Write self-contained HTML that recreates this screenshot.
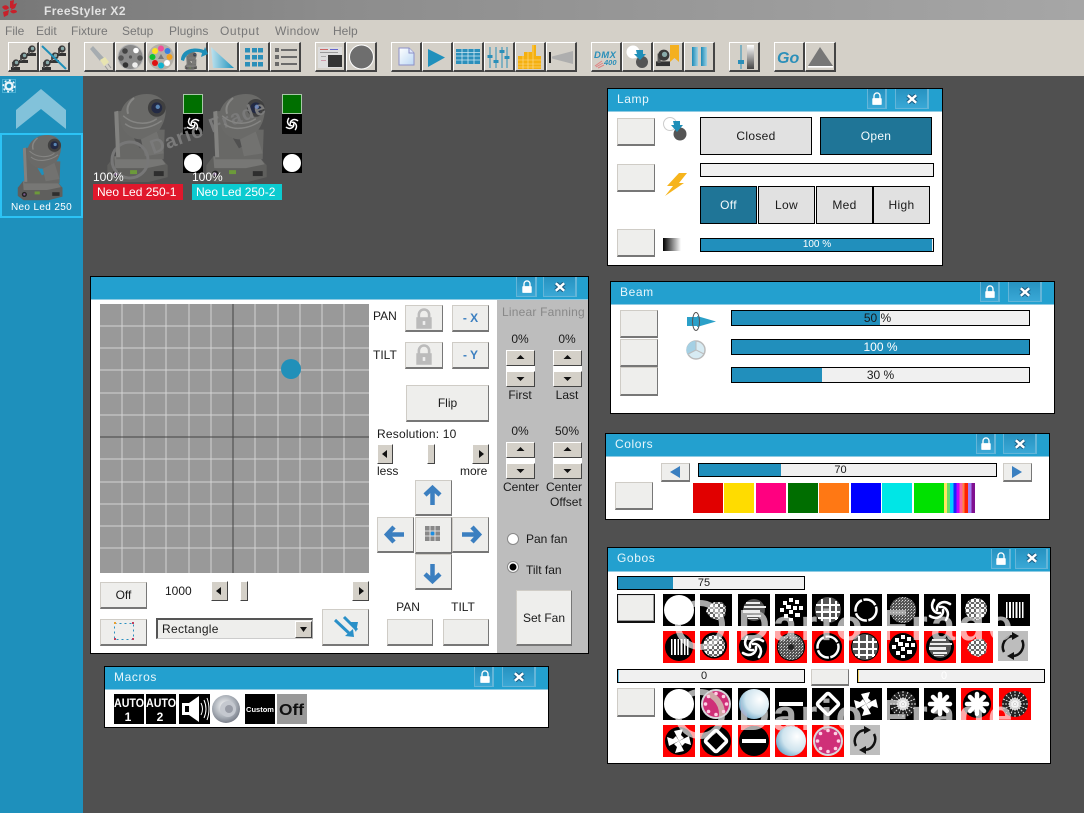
<!DOCTYPE html>
<html><head><meta charset="utf-8"><title>FreeStyler X2</title>
<style>
html,body{margin:0;padding:0}
body{width:1084px;height:813px;overflow:hidden;position:relative;background:#505050;font-family:"Liberation Sans",sans-serif;font-size:12px;color:#1a1a1a}
.a{position:absolute;box-sizing:border-box}
.t{position:absolute;white-space:nowrap;line-height:14px;font-size:12px;color:#1a1a1a}
.c{text-align:center}
.w{position:absolute;box-sizing:border-box;background:#fff;border:1px solid #000}
.h{position:absolute;box-sizing:border-box;background:#23a0cf;border-bottom:1px solid #8fcbe3;color:#e8f6fb;line-height:20px;padding-left:9px;letter-spacing:.6px;font-size:12px}
.b{position:absolute;box-sizing:border-box;background:#eeeeec;border-top:1px solid #cfccc6;border-left:1px solid #cfccc6;border-right:1px solid #777;border-bottom:2px solid #777;text-align:center;color:#1a1a1a}
.tb{position:absolute;box-sizing:border-box;top:42px;width:31px;height:30px;background:#d4d0c8;border-top:1px solid #fff;border-left:1px solid #fff;border-right:2px solid #444;border-bottom:2px solid #444}
.l{position:absolute;box-sizing:border-box;top:0;height:20px;background:linear-gradient(#2792c0,#39a8d6);border:1px solid #64b5d8;border-top:0;border-right:2px solid #64b5d8}
.bar{position:absolute;box-sizing:border-box;background:#f0f0f0;border:1px solid #000;text-align:center;overflow:hidden}
.fill{position:absolute;left:0;top:0;bottom:0;background:#218fbc}
.bar span{position:relative;display:block}
.ctl{position:absolute;box-sizing:border-box;background:#e1e1e1;border:1px solid #000;text-align:center;line-height:36px;letter-spacing:.3px}
.on{background:#1f7597;color:#f4fbfd}
.sp{position:absolute;box-sizing:border-box;background:#d4d0c8;border-top:1px solid #fff;border-left:1px solid #fff;border-right:1px solid #444;border-bottom:1px solid #444}
.wm{position:absolute;white-space:nowrap;font-weight:bold;mix-blend-mode:lighten}
</style></head><body>

<div class="a" style="left:0;top:0;width:1084px;height:20px;background:linear-gradient(90deg,#777 0,#8c8c8c 30%,#a6a6a6 100%)"></div>
<div class="t" style="left:44px;top:4px;color:#e2e2e2;font-weight:bold;letter-spacing:.4px">FreeStyler X2</div>
<div class="a" style="left:0;top:20px;width:1084px;height:56px;background:#d4d0c8"></div>
<div class="t" style="left:5px;top:24px;color:#777">File</div>
<div class="t" style="left:36px;top:24px;color:#777">Edit</div>
<div class="t" style="left:71px;top:24px;color:#777">Fixture</div>
<div class="t" style="left:122px;top:24px;color:#777">Setup</div>
<div class="t" style="left:169px;top:24px;color:#777">Plugins</div>
<div class="t" style="left:220px;top:24px;color:#777;letter-spacing:.6px">Output</div>
<div class="t" style="left:275px;top:24px;color:#777;letter-spacing:.3px">Window</div>
<div class="t" style="left:333px;top:24px;color:#777">Help</div>

<div class="tb" style="left:8px"></div><div class="tb" style="left:39px"></div>
<div class="tb" style="left:84px"></div><div class="tb" style="left:115px"></div><div class="tb" style="left:146px"></div><div class="tb" style="left:177px"></div><div class="tb" style="left:208px"></div><div class="tb" style="left:239px"></div><div class="tb" style="left:270px"></div>
<div class="tb" style="left:315px"></div><div class="tb" style="left:346px"></div>
<div class="tb" style="left:391px"></div><div class="tb" style="left:422px"></div><div class="tb" style="left:453px"></div><div class="tb" style="left:484px"></div><div class="tb" style="left:515px"></div><div class="tb" style="left:546px"></div>
<div class="tb" style="left:591px"></div><div class="tb" style="left:622px"></div><div class="tb" style="left:653px"></div><div class="tb" style="left:684px"></div>
<div class="tb" style="left:729px"></div>
<div class="tb" style="left:774px"></div><div class="tb" style="left:805px"></div>

<!-- sidebar -->
<div class="a" style="left:0;top:76px;width:83px;height:737px;background:#1e90bc"></div>
<div class="a" style="left:0;top:133px;width:83px;height:85px;border:2px solid #2cc3f5"></div>
<div class="t c" style="left:0;top:201px;width:83px;font-size:10px;color:#fff;letter-spacing:.35px">Neo Led 250</div>

<!-- fixtures -->
<div class="a" style="left:93px;top:184px;width:90px;height:16px;background:#e0182c"></div>
<div class="a" style="left:192px;top:184px;width:90px;height:16px;background:#0ccbd0"></div>
<div class="a" style="left:183px;top:94px;width:20px;height:20px;background:#006f00;border:1px solid #a8c8a8"></div>
<div class="a" style="left:282px;top:94px;width:20px;height:20px;background:#006f00;border:1px solid #a8c8a8"></div>

<!-- Lamp -->
<div class="w" style="left:607px;top:88px;width:336px;height:178px"></div>
<div class="h" style="left:608px;top:89px;width:334px;height:23px">Lamp</div>
<div class="l" style="left:867px;top:89px;width:20px"></div><div class="l" style="left:895px;top:89px;width:34px"></div>
<div class="b" style="left:617px;top:118px;width:38px;height:28px"></div>
<div class="b" style="left:617px;top:164px;width:38px;height:28px"></div>
<div class="b" style="left:617px;top:229px;width:38px;height:28px"></div>
<div class="ctl" style="left:700px;top:117px;width:112px;height:38px">Closed</div>
<div class="ctl on" style="left:820px;top:117px;width:112px;height:38px">Open</div>
<div class="bar" style="left:700px;top:163px;width:234px;height:14px"></div>
<div class="ctl on" style="left:700px;top:186px;width:57px;height:38px">Off</div>
<div class="ctl" style="left:758px;top:186px;width:57px;height:38px">Low</div>
<div class="ctl" style="left:816px;top:186px;width:57px;height:38px">Med</div>
<div class="ctl" style="left:873px;top:186px;width:57px;height:38px">High</div>
<div class="bar" style="left:700px;top:238px;width:234px;height:14px;line-height:12px;font-size:10px;color:#fff"><div class="fill" style="right:1px"></div><span>100 %</span></div>

<!-- Beam -->
<div class="w" style="left:610px;top:281px;width:445px;height:133px"></div>
<div class="h" style="left:611px;top:282px;width:443px;height:23px">Beam</div>
<div class="l" style="left:980px;top:282px;width:20px"></div><div class="l" style="left:1008px;top:282px;width:34px"></div>
<div class="b" style="left:620px;top:310px;width:38px;height:28px"></div>
<div class="b" style="left:620px;top:339px;width:38px;height:28px"></div>
<div class="b" style="left:620px;top:367px;width:38px;height:29px"></div>
<div class="bar" style="left:731px;top:310px;width:299px;height:16px;line-height:14px"><div class="fill" style="width:148px"></div><span style="padding-right:6px">50 %</span></div>
<div class="bar" style="left:731px;top:339px;width:299px;height:16px;line-height:14px;color:#fff"><div class="fill" style="right:0"></div><span>100 %</span></div>
<div class="bar" style="left:731px;top:367px;width:299px;height:16px;line-height:14px"><div class="fill" style="width:90px"></div><span>30 %</span></div>

<!-- Colors -->
<div class="w" style="left:605px;top:433px;width:445px;height:87px"></div>
<div class="h" style="left:606px;top:434px;width:443px;height:23px">Colors</div>
<div class="l" style="left:976px;top:434px;width:20px"></div><div class="l" style="left:1003px;top:434px;width:34px"></div>
<div class="b" style="left:615px;top:482px;width:38px;height:28px"></div>
<div class="b" style="left:661px;top:463px;width:29px;height:19px"></div>
<div class="b" style="left:1003px;top:463px;width:29px;height:19px"></div>
<div class="bar" style="left:698px;top:463px;width:299px;height:14px;line-height:12px;font-size:11px"><div class="fill" style="width:82px"></div><span style="padding-right:14px">70</span></div>
<div class="a" style="left:693px;top:483px;width:30px;height:30px;background:#e10000"></div>
<div class="a" style="left:724px;top:483px;width:30px;height:30px;background:#ffdc00"></div>
<div class="a" style="left:756px;top:483px;width:30px;height:30px;background:#ff0080"></div>
<div class="a" style="left:788px;top:483px;width:30px;height:30px;background:#006e00"></div>
<div class="a" style="left:819px;top:483px;width:30px;height:30px;background:#ff7814"></div>
<div class="a" style="left:851px;top:483px;width:30px;height:30px;background:#0000ff"></div>
<div class="a" style="left:882px;top:483px;width:30px;height:30px;background:#00e6e6"></div>
<div class="a" style="left:914px;top:483px;width:30px;height:30px;background:#00e100"></div>
<div class="a" style="left:944px;top:483px;width:31px;height:30px;background:linear-gradient(90deg,#ffe860 0 10%,#66e066 10% 20%,#00d0ff 20% 30%,#2020ff 30% 40%,#c000ff 40% 50%,#ff60a0 50% 60%,#ff8040 60% 66%,#ff2000 66% 78%,#a080f0 78% 88%,#801090 88%)"></div>

<!-- Gobos -->
<div class="w" style="left:607px;top:547px;width:444px;height:217px"></div>
<div class="h" style="left:608px;top:548px;width:442px;height:24px">Gobos</div>
<div class="l" style="left:991px;top:549px;width:20px"></div><div class="l" style="left:1015px;top:549px;width:33px"></div>
<div class="bar" style="left:617px;top:576px;width:188px;height:14px;line-height:12px;font-size:11px"><div class="fill" style="width:55px"></div><span style="padding-right:14px">75</span></div>
<div class="b" style="left:617px;top:594px;width:38px;height:29px;border:1px solid #111;border-bottom:2px solid #111;box-shadow:inset -1px -1px 0 #999,inset 1px 1px 0 #ddd"></div>
<div class="bar" style="left:617px;top:669px;width:188px;height:14px;line-height:12px;font-size:11px"><div class="fill" style="width:1px;background:#6fc0e0"></div><span style="padding-right:14px">0</span></div>
<div class="b" style="left:811px;top:669px;width:38px;height:17px"></div>
<div class="bar" style="left:857px;top:669px;width:188px;height:14px;line-height:12px;font-size:11px;color:#fff"><div class="fill" style="width:1px;background:#f0d060"></div><span style="padding-right:14px">0</span></div>
<div class="b" style="left:617px;top:688px;width:38px;height:29px"></div>

<!-- XY window -->
<div class="w" style="left:90px;top:276px;width:499px;height:378px"></div>
<div class="h" style="left:91px;top:277px;width:497px;height:23px"></div>
<div class="l" style="left:516px;top:277px;width:21px"></div><div class="l" style="left:543px;top:277px;width:34px"></div>
<div class="a" style="left:497px;top:300px;width:91px;height:353px;background:#bdbdbd"></div>
<div class="t" style="left:373px;top:309px">PAN</div>
<div class="t" style="left:373px;top:348px">TILT</div>
<div class="b" style="left:405px;top:305px;width:38px;height:27px"></div>
<div class="b" style="left:452px;top:305px;width:37px;height:27px;line-height:25px;color:#3b7fc0;font-weight:bold">- X</div>
<div class="b" style="left:405px;top:342px;width:38px;height:27px"></div>
<div class="b" style="left:452px;top:342px;width:37px;height:27px;line-height:25px;color:#3b7fc0;font-weight:bold">- Y</div>
<div class="b" style="left:406px;top:385px;width:83px;height:37px;line-height:35px">Flip</div>
<div class="t" style="left:377px;top:427px;letter-spacing:.2px">Resolution: 10</div>
<div class="sp" style="left:377px;top:444px;width:16px;height:20px"></div>
<div class="sp" style="left:472px;top:444px;width:17px;height:20px"></div>
<div class="sp" style="left:427px;top:444px;width:8px;height:20px"></div>
<div class="t" style="left:377px;top:464px">less</div>
<div class="t" style="left:460px;top:464px">more</div>
<div class="b" style="left:415px;top:480px;width:37px;height:36px"></div>
<div class="b" style="left:377px;top:517px;width:37px;height:36px"></div>
<div class="b" style="left:415px;top:517px;width:37px;height:37px"></div>
<div class="b" style="left:452px;top:517px;width:37px;height:36px"></div>
<div class="b" style="left:415px;top:554px;width:37px;height:36px"></div>
<div class="t c" style="left:388px;top:600px;width:40px">PAN</div>
<div class="t c" style="left:443px;top:600px;width:40px">TILT</div>
<div class="b" style="left:387px;top:619px;width:46px;height:27px"></div>
<div class="b" style="left:443px;top:619px;width:46px;height:27px"></div>

<div class="t" style="left:502px;top:305px;color:#888;letter-spacing:.2px">Linear Fanning</div>
<div class="t c" style="left:500px;top:332px;width:40px">0%</div>
<div class="t c" style="left:547px;top:332px;width:40px">0%</div>
<div class="a" style="left:506px;top:366px;width:29px;height:5px;background:#fff"></div>
<div class="a" style="left:553px;top:366px;width:29px;height:5px;background:#fff"></div>
<div class="sp" style="left:506px;top:350px;width:29px;height:16px"></div>
<div class="sp" style="left:506px;top:371px;width:29px;height:16px"></div>
<div class="sp" style="left:553px;top:350px;width:29px;height:16px"></div>
<div class="sp" style="left:553px;top:371px;width:29px;height:16px"></div>
<div class="t c" style="left:500px;top:388px;width:40px">First</div>
<div class="t c" style="left:547px;top:388px;width:40px">Last</div>
<div class="t c" style="left:500px;top:424px;width:40px">0%</div>
<div class="t c" style="left:547px;top:424px;width:40px">50%</div>
<div class="a" style="left:506px;top:458px;width:29px;height:5px;background:#fff"></div>
<div class="a" style="left:553px;top:458px;width:29px;height:5px;background:#fff"></div>
<div class="sp" style="left:506px;top:442px;width:29px;height:16px"></div>
<div class="sp" style="left:506px;top:463px;width:29px;height:16px"></div>
<div class="sp" style="left:553px;top:442px;width:29px;height:16px"></div>
<div class="sp" style="left:553px;top:463px;width:29px;height:16px"></div>
<div class="t" style="left:503px;top:480px">Center</div>
<div class="t" style="left:546px;top:480px">Center</div>
<div class="t" style="left:550px;top:495px">Offset</div>
<div class="t" style="left:526px;top:532px">Pan fan</div>
<div class="t" style="left:526px;top:563px">Tilt fan</div>
<div class="b" style="left:516px;top:590px;width:56px;height:56px;line-height:54px">Set Fan</div>

<div class="b" style="left:100px;top:582px;width:47px;height:27px;line-height:25px">Off</div>
<div class="t" style="left:165px;top:584px">1000</div>
<div class="sp" style="left:211px;top:581px;width:17px;height:20px"></div>
<div class="sp" style="left:240px;top:581px;width:8px;height:20px"></div>
<div class="sp" style="left:352px;top:581px;width:17px;height:20px"></div>
<div class="b" style="left:100px;top:619px;width:47px;height:27px"></div>
<div class="a" style="left:156px;top:618px;width:157px;height:21px;background:#eeeeec;border-top:2px solid #555;border-left:2px solid #555;border-right:1px solid #aaa;border-bottom:1px solid #ccc"></div>
<div class="t" style="left:162px;top:622px;letter-spacing:.3px">Rectangle</div>
<div class="sp" style="left:295px;top:621px;width:17px;height:17px"></div>
<div class="b" style="left:322px;top:609px;width:47px;height:37px"></div>

<!-- Macros -->
<div class="w" style="left:104px;top:666px;width:445px;height:62px"></div>
<div class="h" style="left:105px;top:667px;width:443px;height:23px">Macros</div>
<div class="l" style="left:474px;top:667px;width:20px"></div><div class="l" style="left:502px;top:667px;width:34px"></div>

<!-- all graphics -->
<svg class="a" style="left:0;top:0" width="1084" height="813" viewBox="0 0 1084 813" xmlns="http://www.w3.org/2000/svg">
<defs>
<linearGradient id="fade" x1="0" x2="1"><stop offset="0" stop-color="#000"/><stop offset="1" stop-color="#fff"/></linearGradient>
<linearGradient id="vf" x1="0" x2="0" y1="0" y2="1"><stop offset="0" stop-color="#fff"/><stop offset="1" stop-color="#444"/></linearGradient>
<linearGradient id="tri" x1="0" x2="1" y1="0" y2="0"><stop offset="0" stop-color="#bfe2ee"/><stop offset="1" stop-color="#1f93bd"/></linearGradient>
<linearGradient id="doc" x1="0" x2="1" y1="0" y2="1"><stop offset="0" stop-color="#fff"/><stop offset="1" stop-color="#bcd8f4"/></linearGradient>
<linearGradient id="pz" x1="0" x2="1"><stop offset="0" stop-color="#1b8ab6"/><stop offset="1" stop-color="#9fd2e4"/></linearGradient>
<radialGradient id="glassG" cx=".7" cy=".35" r=".8"><stop offset="0" stop-color="#fff"/><stop offset=".6" stop-color="#cfe4ee"/><stop offset="1" stop-color="#5f9fc4"/></radialGradient>
<radialGradient id="spk" cx=".45" cy=".4" r=".65"><stop offset="0" stop-color="#fff"/><stop offset=".6" stop-color="#aab0b8"/><stop offset="1" stop-color="#6f7480"/></radialGradient>
<pattern id="sp1" width="5" height="5" patternUnits="userSpaceOnUse"><rect width="5" height="5" fill="#666"/><rect width="3" height="3" fill="#fff"/><rect x="3" y="3" width="2" height="2" fill="#ddd"/></pattern>
<pattern id="sp2" width="3" height="3" patternUnits="userSpaceOnUse"><rect width="3" height="3" fill="#555"/><rect width="1" height="1" fill="#ddd"/><rect x="2" y="1" width="1" height="1" fill="#aaa"/></pattern>

<symbol id="head" viewBox="0 0 62 90" overflow="visible">
<path d="M0 72 7 63H53L61 72V84L42 89H8L0 83Z" fill="#5f5f5d"/>
<path d="M7 63H53L59 71 40 75H8Z" fill="#777775"/>
<rect x="47" y="78" width="10" height="5" fill="#2e2e2e"/>
<circle cx="9" cy="81" r="3.500" fill="#222"/><circle cx="9" cy="81" r="1.600" fill="#7a5a8a"/>
<rect x="23" y="77" width="7" height="4" fill="#6c9a3a"/>
<path d="M7 18 24 16 27 45 33 55 45 48 52 36 58 36 57 66H9Z" fill="#686866"/>
<path d="M7 18 11 17 13 64H9Z" fill="#828280"/>
<path d="M13 24C13 10 25 0 40 0 52 0 60 7 59 18 58 33 48 46 35 46 22 46 13 37 13 24Z" fill="#6a6a68"/>
<path d="M18 30C27 38 44 35 55 27M16 22C27 32 42 31 50 25" stroke="#858583" fill="none" stroke-width="1.500"/>
<path d="M27 4C21 9 19 14 21 20" stroke="#878785" fill="none" stroke-width="2"/>
<circle cx="50" cy="14" r="9" fill="#404040"/>
<circle cx="50" cy="14" r="5.500" fill="#232a44"/>
<circle cx="51" cy="13" r="2.200" fill="#5a86b4"/>
<path d="M34 46 50 38 57 60 38 63Z" fill="#727270"/>
</symbol>

<symbol id="mh" viewBox="0 0 9 11" overflow="visible"><rect x="0" y="8" width="9" height="3" fill="#333"/><rect x="1" y="3" width="2" height="6" fill="#555"/><circle cx="5" cy="4" r="3.600" fill="#3a3a3a"/><circle cx="5.500" cy="3.500" r="1.700" fill="#8aa"/></symbol>

<symbol id="swirl" viewBox="0 0 32 32"><g fill="none" stroke="#fff" stroke-width="2.600" stroke-linecap="round"><path d="M19 16C20 21 14 27 6 22"/><path d="M19 16C20 21 14 27 6 22" transform="rotate(90 16 16)"/><path d="M19 16C20 21 14 27 6 22" transform="rotate(180 16 16)"/><path d="M19 16C20 21 14 27 6 22" transform="rotate(270 16 16)"/></g></symbol>
<symbol id="open" viewBox="0 0 32 32"><circle cx="16" cy="16" r="15" fill="#fff"/></symbol>
<symbol id="scat" viewBox="0 0 32 32"><path d="M8 12 14 8 22 8 26 13 25 22 18 26 11 24 6 18Z" fill="url(#sp1)"/></symbol>
<symbol id="stripes" viewBox="0 0 32 32"><circle cx="16" cy="16" r="11" fill="#555"/><g fill="#eee"><rect x="8" y="8" width="14" height="2"/><rect x="6" y="12" width="22" height="2"/><rect x="5" y="16" width="17" height="3"/><rect x="9" y="21" width="14" height="2"/><rect x="10" y="24" width="10" height="1"/></g></symbol>
<symbol id="flake" viewBox="0 0 32 32"><g fill="#fff"><rect x="14" y="4" width="4" height="4"/><rect x="20" y="6" width="4" height="4"/><rect x="8" y="7" width="4" height="4"/><rect x="11" y="11" width="5" height="4"/><rect x="18" y="12" width="4" height="4"/><rect x="24" y="12" width="4" height="4"/><rect x="5" y="14" width="4" height="4"/><rect x="14" y="16" width="4" height="4"/><rect x="9" y="20" width="4" height="4"/><rect x="20" y="19" width="5" height="4"/><rect x="14" y="24" width="4" height="3"/></g></symbol>
<symbol id="grid" viewBox="0 0 32 32"><circle cx="16" cy="16" r="13" fill="#555"/><g stroke="#fff" stroke-width="2" fill="none"><path d="M10 5V27M18 4V28M24 7V26M4 11H28M4 18H28M6 24H26"/></g></symbol>
<symbol id="ring" viewBox="0 0 32 32"><circle cx="16" cy="16" r="10.500" fill="none" stroke="#fff" stroke-width="2.500" stroke-dasharray="14 1.500"/></symbol>
<symbol id="noise" viewBox="0 0 32 32"><circle cx="16" cy="16" r="13" fill="url(#sp2)"/><circle cx="16" cy="16" r="3" fill="#222"/></symbol>
<symbol id="noise2" viewBox="0 0 32 32"><circle cx="16" cy="16" r="13" fill="#6a6a6a"/><rect x="6" y="14" width="20" height="9" fill="#aaa"/><circle cx="16" cy="16" r="13" fill="url(#sp2)"/></symbol>
<symbol id="blob" viewBox="0 0 32 32"><circle cx="15" cy="15" r="11" fill="url(#sp1)"/></symbol>
<symbol id="bars" viewBox="0 0 32 32"><g fill="#fff"><rect x="8" y="8" width="1.500" height="16"/><rect x="11" y="8" width="2" height="16"/><rect x="14.500" y="8" width="1.500" height="16"/><rect x="17.500" y="8" width="2" height="16"/><rect x="21" y="8" width="1.500" height="16"/><rect x="24" y="8" width="1.500" height="16"/></g></symbol>
<symbol id="pink" viewBox="0 0 32 32"><circle cx="16" cy="16" r="15" fill="#d8d8dc"/><circle cx="16" cy="16" r="13" fill="#cf2f78"/><g fill="#ffd0e4"><circle cx="16" cy="5.500" r="1.800"/><circle cx="23.500" cy="8.500" r="1.800"/><circle cx="26.500" cy="16" r="1.800"/><circle cx="23.500" cy="23.500" r="1.800"/><circle cx="16" cy="26.500" r="1.800"/><circle cx="8.500" cy="23.500" r="1.800"/><circle cx="5.500" cy="16" r="1.800"/><circle cx="8.500" cy="8.500" r="1.800"/></g></symbol>
<symbol id="glass" viewBox="0 0 32 32"><circle cx="16" cy="16" r="15" fill="url(#glassG)"/></symbol>
<symbol id="line" viewBox="0 0 32 32"><rect x="4" y="14" width="24" height="4" fill="#fff"/></symbol>
<symbol id="diam" viewBox="0 0 32 32"><rect x="8" y="8" width="16" height="16" rx="2" fill="none" stroke="#fff" stroke-width="3.500" transform="rotate(45 16 16)"/></symbol>
<symbol id="pin" viewBox="0 0 32 32"><g fill="#fff"><path d="M16 16 11 6 20 4 18 10 21 13Z"/><path d="M16 16 11 6 20 4 18 10 21 13Z" transform="rotate(90 16 16)"/><path d="M16 16 11 6 20 4 18 10 21 13Z" transform="rotate(180 16 16)"/><path d="M16 16 11 6 20 4 18 10 21 13Z" transform="rotate(270 16 16)"/></g></symbol>
<symbol id="burst" viewBox="0 0 32 32"><circle cx="16" cy="16" r="13" fill="#222"/><g stroke="#ddd" stroke-width="1" stroke-dasharray="2 1"><path d="M16 3V29M3 16H29M7 7 25 25M25 7 7 25M11 4 21 28M21 4 11 28M4 11 28 21M4 21 28 11"/></g><circle cx="16" cy="16" r="6" fill="#fff" opacity=".8"/></symbol>
<symbol id="star" viewBox="0 0 32 32"><g stroke="#fff" stroke-width="4.500" stroke-linecap="round"><path d="M16 6V26M6 16H26M9 9 23 23M23 9 9 23"/></g><circle cx="16" cy="16" r="6" fill="#fff"/></symbol>
<symbol id="refresh" viewBox="0 0 30 30"><rect width="30" height="30" fill="#bdbdbd"/><g fill="none" stroke="#111" stroke-width="2.500"><path d="M6 21A11 11 0 0 1 15 5"/><path d="M24 9A11 11 0 0 1 15 25"/></g><path d="M14 1 21 5 14 9ZM16 21 9 25 16 29Z" fill="#111"/></symbol>

<symbol id="lock" viewBox="0 0 14 16"><path d="M3.500 8V5A3.500 3.500 0 0 1 10.500 5V8" fill="none" stroke="#fff" stroke-width="1.600"/><rect x="1.500" y="7.500" width="11" height="8" rx="1" fill="#fff"/></symbol>
<symbol id="x" viewBox="0 0 14 12"><path d="M2 1.500 12 10.500M12 1.500 2 10.500" stroke="#1f5f85" stroke-width="5.500"/><path d="M2 1.500 12 10.500M12 1.500 2 10.500" stroke="#fff" stroke-width="3"/></symbol>
<symbol id="glock" viewBox="0 0 14 16"><path d="M3 8V5A4 4 0 0 1 11 5V8" fill="none" stroke="#bbb" stroke-width="2"/><rect x="1" y="7" width="12" height="9" fill="#bbb"/><rect x="6" y="10" width="2" height="3" fill="#eee"/></symbol>
</defs>

<!-- logo -->
<g fill="#c8202a"><path d="M2 7C5 4 8 5 9 8 6 11 4 10 2 7ZM10 1 14 0 13 8 10 8ZM17 3 15 8 11 10 12 5ZM3 12 9 10 8 15 4 17ZM10 11C14 9 17 10 17 12 14 14 12 14 10 11Z"/></g>

<!-- toolbar icons -->
<use href="#mh" x="11" y="59" width="9" height="11"/><use href="#mh" x="19" y="52" width="9" height="11"/><use href="#mh" x="27" y="45" width="9" height="11"/>
<use href="#mh" x="42" y="59" width="9" height="11"/><use href="#mh" x="50" y="52" width="9" height="11"/><use href="#mh" x="57" y="45" width="9" height="11"/>
<path d="M42 46 66 69" stroke="#1f8fb8" stroke-width="2"/>
<path d="M90 49 93 46 104 58 100 61Z" fill="#a6acb0"/><path d="M100 60 105 57 109 62 104 66Z" fill="#e8e4b0"/><path d="M105 66 108 70M108 64 111 68" stroke="#999"/>
<circle cx="130.500" cy="57" r="12.500" fill="#8a8a8a" stroke="#bbb"/>
<circle cx="136" cy="50.500" r="2.800" fill="#fff"/><circle cx="125" cy="51" r="2.800" fill="#444"/><circle cx="121" cy="58" r="2.800" fill="#555"/><circle cx="140" cy="58" r="2.800" fill="#555"/><circle cx="125.500" cy="65" r="2.800" fill="#333"/><circle cx="135" cy="65" r="2.800" fill="#eee"/><circle cx="130.500" cy="57" r="1.600" fill="#555"/>
<circle cx="161" cy="57" r="13" fill="#b4b0a8"/><circle cx="161" cy="48.500" r="3" fill="#f0509a"/><circle cx="167.500" cy="51" r="3" fill="#3a7fe0"/><circle cx="169.500" cy="57" r="3" fill="#f0a020"/><circle cx="167" cy="63" r="3" fill="#fff"/><circle cx="161" cy="65.500" r="3" fill="#10b4d0"/><circle cx="155" cy="63" r="3" fill="#e01010"/><circle cx="152.500" cy="57" r="3" fill="#10c030"/><circle cx="155" cy="51" r="3" fill="#ffe020"/><path d="M161 54 164 59H158Z" fill="#777"/>
<use href="#head" x="183" y="52" width="16" height="18" opacity=".9"/>
<path d="M181 60C181 50 193 46 204 50L205 47 208 54 201 57 202 53C194 50 186 53 184 61Z" fill="#1f8fb8"/>
<path d="M211 47 234 68H213Z" fill="url(#tri)"/>
<g fill="#2b8fb9"><rect x="245" y="48" width="5" height="4.500"/><rect x="252" y="48" width="5" height="4.500"/><rect x="258" y="48" width="5" height="4.500"/><rect x="245" y="55" width="5" height="4.500"/><rect x="252" y="55" width="5" height="4.500"/><rect x="258" y="55" width="5" height="4.500"/><rect x="245" y="62" width="5" height="4.500"/><rect x="252" y="62" width="5" height="4.500"/><rect x="258" y="62" width="5" height="4.500"/></g>
<g fill="#6a6a6a"><rect x="275" y="48" width="4" height="4"/><rect x="275" y="55" width="4" height="4"/><rect x="275" y="62" width="4" height="4"/><rect x="281" y="49" width="16" height="2"/><rect x="281" y="56" width="16" height="2"/><rect x="281" y="63" width="16" height="2"/></g>
<rect x="318" y="47" width="24" height="21" fill="#ddd"/><g fill="#c66"><rect x="320" y="49" width="8" height="1"/></g><rect x="330" y="49" width="8" height="1" fill="#66c"/><rect x="320" y="52" width="18" height="1" fill="#999"/><rect x="328" y="55" width="14" height="12" fill="#333"/><rect x="321" y="56" width="5" height="1" fill="#aaa"/><rect x="321" y="60" width="5" height="1" fill="#c9a"/>
<circle cx="361.500" cy="57" r="12" fill="#6e6e6e" stroke="#fff" stroke-width="1"/>
<path d="M399 48H409L414 53V65H399Z" fill="url(#doc)" stroke="#8c90c8"/><path d="M409 48V53H414" fill="#dfe8fa" stroke="#8c90c8"/>
<path d="M428 49 445 57.500 428 67Z" fill="#2090bc"/>
<rect x="456" y="49" width="24" height="15" fill="#2b8fbb"/><path d="M456 52.500H480M456 56H480M456 60H480M462 49V64M468 49V64M474 49V64" stroke="#cfe8f2" stroke-width=".8"/>
<path d="M490 47V68M496 47V68M502 47V68M507 47V68" stroke="#2b8fb9"/><g fill="#2b8fb9"><rect x="487.500" y="55" width="5" height="3"/><rect x="493.500" y="60" width="5" height="3"/><rect x="499.500" y="50" width="5" height="3"/><rect x="504.500" y="56" width="5" height="3"/></g>
<path d="M518 69V56H524V52H532V45H536V56H541V69Z" fill="#f4b010"/><path d="M518 60H541M518 64H541M518 67H541M523 56V69M528 52V69M533 45V69" stroke="#ffe098" stroke-width=".6"/>
<rect x="549" y="52" width="2" height="11" fill="#222"/><path d="M552 56.500 573 51V64L552 58.500Z" fill="#aeaeae"/>
<text x="594" y="58" font-family="Liberation Sans" font-size="9.500" font-weight="bold" font-style="italic" fill="#2b8fb9" letter-spacing=".4">DMX</text>
<text x="604" y="65" font-family="Liberation Sans" font-size="7.500" font-weight="bold" font-style="italic" fill="#2b8fb9">400</text>
<path d="M595 66 602 61M596 67 603 63M598 68 604 65" stroke="#e08080" stroke-width="1"/>
<circle cx="633" cy="52" r="6.500" fill="#fff"/><circle cx="642" cy="62" r="6" fill="#555"/><path d="M636 50H643V54H646L640 60 634 54H637Z" fill="#1f8fb8"/>
<use href="#mh" x="656" y="47" width="14" height="21"/><path d="M670 45H679V62L674.500 58 670 62Z" fill="#f4b020"/>
<rect x="692" y="47" width="6" height="19" fill="url(#pz)"/><rect x="701" y="47" width="6" height="19" fill="url(#pz)"/>
<path d="M741 45V69" stroke="#2b8fb9"/><rect x="738" y="60" width="6" height="4" fill="#2b8fb9"/><rect x="747" y="45" width="7" height="24" fill="url(#vf)"/>
<text x="777" y="63" font-family="Liberation Sans" font-size="16" font-weight="bold" font-style="italic" fill="#2b8fb9">Go</text>
<path d="M820 47 833 66H808Z" fill="#777"/><rect x="808" y="66" width="25" height="1.600" fill="#fff"/>

<!-- sidebar -->
<g fill="none" stroke="#4ab0d4"><rect x="2.500" y="79.500" width="13" height="13"/></g><circle cx="9" cy="86" r="3.500" fill="none" stroke="#eaf6fb" stroke-width="2.400"/><circle cx="9" cy="86" r="5.800" fill="none" stroke="#eaf6fb" stroke-width="1.600" stroke-dasharray="2 2.500"/>
<path d="M16 110 41 89 66 110V129L41 109 16 129Z" fill="#82c2da"/>
<use href="#head" x="16" y="135" width="49" height="66"/>

<!-- heads -->
<use href="#head" x="107" y="94" width="62" height="89"/>
<use href="#head" x="206" y="94" width="62" height="89"/>
<rect x="183" y="114" width="20" height="20" fill="#000"/><use href="#swirl" x="184" y="115" width="18" height="18"/>
<rect x="183" y="153" width="20" height="20" fill="#000"/><circle cx="193" cy="163" r="9" fill="#fff"/>
<rect x="282" y="114" width="20" height="20" fill="#000"/><use href="#swirl" x="283" y="115" width="18" height="18"/>
<rect x="282" y="153" width="20" height="20" fill="#000"/><circle cx="292" cy="163" r="9" fill="#fff"/>
<g font-family="Liberation Sans" font-size="12" fill="#fff"><text x="93" y="181">100%</text><text x="192" y="181">100%</text><text x="97" y="196">Neo Led 250-1</text><text x="196" y="196">Neo Led 250-2</text></g>

<!-- title buttons -->
<use href="#lock" x="871" y="91" width="12" height="15"/><use href="#x" x="906" y="94" width="12" height="10"/>
<use href="#lock" x="984" y="284" width="12" height="15"/><use href="#x" x="1019" y="287" width="12" height="10"/>
<use href="#lock" x="980" y="436" width="12" height="15"/><use href="#x" x="1014" y="439" width="12" height="10"/>
<use href="#lock" x="995" y="551" width="12" height="15"/><use href="#x" x="1026" y="553" width="12" height="10"/>
<use href="#lock" x="521" y="279" width="12" height="15"/><use href="#x" x="554" y="282" width="12" height="10"/>
<use href="#lock" x="479" y="669" width="12" height="15"/><use href="#x" x="513" y="672" width="12" height="10"/>

<!-- lamp icons -->
<circle cx="670" cy="124" r="6.500" fill="#fff" stroke="#ccc"/><circle cx="680" cy="134" r="6.500" fill="#555"/><path d="M673 121H680V125H683L677 132 671 125H674Z" fill="#1f8fb8"/>
<path d="M679 173 687 173 679 183 684 183 665 196 673 186 667 186Z" fill="#f6b41c"/>
<rect x="663" y="238" width="18" height="13" fill="url(#fade)"/>
<!-- beam icons -->
<rect x="687" y="317" width="10" height="9" fill="#2ba0c8"/><path d="M697 316 716 321.500 697 327Z" fill="#2ba0c8"/><ellipse cx="696" cy="321.500" rx="3.500" ry="9" fill="none" stroke="#555"/>
<circle cx="696" cy="350" r="9" fill="#d7ebf3" stroke="#bbb" stroke-width="1.500"/><path d="M696 350V341A9 9 0 0 0 688 355Z" fill="#a4d0e4"/><path d="M696 341V350L704 354M696 350 688 354" stroke="#bbb" fill="none"/>
<!-- colors arrows -->
<path d="M680 466V478L670 472Z" fill="#3a7fc0"/><path d="M1012 466V478L1022 472Z" fill="#3a7fc0"/>

<!-- gobos row 1 -->
<g><rect x="663" y="594" width="32" height="32"/><use href="#open" x="663" y="594" width="32" height="32"/>
<rect x="700" y="594" width="32" height="32"/><use href="#scat" x="700" y="594" width="32" height="32"/>
<rect x="738" y="594" width="32" height="32"/><use href="#stripes" x="738" y="594" width="32" height="32"/>
<rect x="775" y="594" width="32" height="32"/><use href="#flake" x="775" y="594" width="32" height="32"/>
<rect x="812" y="594" width="32" height="32"/><use href="#grid" x="812" y="594" width="32" height="32"/>
<rect x="850" y="594" width="32" height="32"/><use href="#ring" x="850" y="594" width="32" height="32"/>
<rect x="887" y="594" width="32" height="32"/><use href="#noise2" x="887" y="594" width="32" height="32"/>
<rect x="924" y="594" width="32" height="32"/><use href="#swirl" x="924" y="594" width="32" height="32"/>
<rect x="961" y="594" width="29" height="29"/><use href="#blob" x="961" y="594" width="32" height="32"/>
<rect x="998" y="594" width="32" height="32"/><use href="#bars" x="998" y="594" width="32" height="32"/></g>
<!-- row 2 -->
<g fill="#f00"><rect x="663" y="631" width="32" height="32"/><rect x="700" y="631" width="29" height="29"/><rect x="737" y="631" width="32" height="32"/><rect x="775" y="631" width="32" height="32"/><rect x="812" y="631" width="32" height="32"/><rect x="849" y="631" width="32" height="32"/><rect x="887" y="631" width="32" height="32"/><rect x="924" y="631" width="32" height="32"/><rect x="961" y="631" width="32" height="32"/></g>
<g><circle cx="679" cy="647" r="14"/><circle cx="714" cy="645.500" r="13"/><circle cx="753" cy="647" r="14"/><circle cx="791" cy="647" r="14"/><circle cx="828" cy="647" r="14"/><circle cx="865" cy="647" r="14"/><circle cx="903" cy="647" r="14"/><circle cx="940" cy="647" r="14"/></g>
<use href="#bars" x="663" y="631" width="32" height="32"/><use href="#blob" x="699" y="631" width="32" height="32"/><use href="#swirl" x="737" y="631" width="32" height="32"/><use href="#noise" x="775" y="631" width="32" height="32"/><use href="#ring" x="812" y="631" width="32" height="32"/><use href="#grid" x="849" y="631" width="32" height="32"/><use href="#flake" x="887" y="631" width="32" height="32"/><use href="#stripes" x="924" y="631" width="32" height="32"/><use href="#scat" x="961" y="631" width="32" height="32"/>
<use href="#refresh" x="998" y="631" width="30" height="30"/>
<!-- row 3 -->
<g><rect x="663" y="688" width="32" height="32"/><use href="#open" x="663" y="688" width="32" height="32"/>
<rect x="700" y="688" width="32" height="32"/><use href="#pink" x="700" y="688" width="32" height="32"/>
<rect x="738" y="688" width="32" height="32"/><use href="#glass" x="738" y="688" width="32" height="32"/>
<rect x="775" y="688" width="32" height="32"/><use href="#line" x="775" y="688" width="32" height="32"/>
<rect x="812" y="688" width="32" height="32"/><use href="#diam" x="812" y="688" width="32" height="32"/>
<rect x="850" y="688" width="32" height="32"/><use href="#pin" x="850" y="688" width="32" height="32"/>
<rect x="887" y="688" width="32" height="32"/><use href="#burst" x="887" y="688" width="32" height="32"/>
<rect x="924" y="688" width="32" height="32"/><use href="#star" x="924" y="688" width="32" height="32"/></g>
<rect x="961" y="688" width="32" height="32" fill="#f00"/><circle cx="977" cy="704" r="14"/><use href="#star" x="961" y="688" width="32" height="32"/>
<rect x="999" y="688" width="32" height="32" fill="#f00"/><use href="#burst" x="999" y="688" width="32" height="32"/>
<!-- row 4 -->
<g fill="#f00"><rect x="663" y="725" width="32" height="32"/><rect x="700" y="725" width="32" height="32"/><rect x="738" y="725" width="32" height="32"/><rect x="775" y="725" width="32" height="32"/><rect x="812" y="725" width="32" height="32"/></g>
<circle cx="679" cy="741" r="14"/><circle cx="716" cy="741" r="15"/><circle cx="754" cy="741" r="15"/>
<use href="#pin" x="663" y="725" width="32" height="32"/><use href="#diam" x="700" y="725" width="32" height="32"/><use href="#line" x="738" y="725" width="32" height="32"/><use href="#glass" x="775" y="725" width="32" height="32"/><use href="#pink" x="812" y="725" width="32" height="32"/>
<use href="#refresh" x="850" y="725" width="30" height="30"/>

<!-- XY pad -->
<rect x="100" y="304" width="269" height="269" fill="#999"/>
<path shape-rendering="crispEdges" d="M122 304V573M144 304V573M166 304V573M189 304V573M211 304V573M255 304V573M278 304V573M300 304V573M322 304V573M344 304V573M100 326H369M100 348H369M100 370H369M100 393H369M100 415H369M100 459H369M100 482H369M100 504H369M100 526H369M100 548H369" stroke="#d4d4d4" stroke-width="1"/>
<path shape-rendering="crispEdges" d="M233 304V573M100 437H369" stroke="#444" stroke-width="1"/>
<circle cx="291" cy="369" r="10" fill="#2190b9"/>
<!-- locks -->
<use href="#glock" x="415" y="308" width="18" height="21"/><use href="#glock" x="415" y="344" width="18" height="21"/>
<!-- scroll arrows -->
<g fill="#111"><path d="M387 450V458L382 454Z"/><path d="M479 450V458L484 454Z"/><path d="M221 587V595L216 591Z"/><path d="M359 587V595L364 591Z"/><path d="M300 627H307L303.500 632Z"/>
<path d="M520.500 355 524.500 359H516.500Z"/><path d="M516.500 377H524.500L520.500 381Z"/><path d="M567.500 355 571.500 359H563.500Z"/><path d="M563.500 377H571.500L567.500 381Z"/>
<path d="M520.500 447 524.500 451H516.500Z"/><path d="M516.500 469H524.500L520.500 473Z"/><path d="M567.500 447 571.500 451H563.500Z"/><path d="M563.500 469H571.500L567.500 473Z"/></g>
<!-- arrows -->
<g fill="none" stroke="#3b7fc0" stroke-width="4.500"><path d="M432.500 505V489M425 495 432.500 488 440 495"/><path d="M432.500 564V580M425 574 432.500 581 440 574"/><path d="M388 534.500H404M394 527 387 534.500 394 542"/><path d="M478 534.500H462M472 527 479 534.500 472 542"/></g>
<g fill="#888"><rect x="425" y="526" width="15" height="15"/></g><path d="M430 526V541M435 526V541M425 531H440M425 536H440" stroke="#ddd"/><circle cx="432.500" cy="533.500" r="2" fill="#1a8ce0"/>
<!-- radios -->
<circle cx="513" cy="539" r="5.500" fill="#fff" stroke="#888"/>
<circle cx="513" cy="567" r="5.500" fill="#fff" stroke="#888"/><circle cx="513" cy="567" r="3.500" fill="#000"/>
<!-- rect icon -->
<rect x="114.500" y="623.500" width="19" height="16" fill="none" stroke="#2a90c0" stroke-dasharray="2 3"/>
<g fill="#c04060"><rect x="132" y="622" width="2" height="2"/><rect x="114" y="638" width="2" height="2"/><rect x="132" y="638" width="2" height="2"/></g><rect x="114" y="622" width="2" height="2" fill="#e8a030"/>
<g fill="none" stroke="#2a90c8" stroke-width="3"><path d="M335 620 351 635M344 617 357 630"/></g><path d="M345 636 354 637 353 629ZM350 622 356 632 358 622Z" fill="#2a90c8"/>
<!-- macros icons -->
<rect x="114" y="694" width="30" height="30"/><rect x="146" y="694" width="30" height="30"/><rect x="179" y="694" width="31" height="30"/><rect x="245" y="694" width="30" height="30"/><rect x="277" y="694" width="30" height="30" fill="#999"/>
<g font-family="Liberation Sans" font-weight="bold" fill="#fff"><text x="114" y="707" font-size="12" textLength="30" lengthAdjust="spacingAndGlyphs">AUTO</text><text x="146" y="707" font-size="12" textLength="30" lengthAdjust="spacingAndGlyphs">AUTO</text><text x="128" y="721" font-size="12" text-anchor="middle">1</text><text x="160" y="721" font-size="12" text-anchor="middle">2</text><text x="260" y="712" font-size="7.500" text-anchor="middle">Custom</text></g>
<text x="279" y="715" font-family="Liberation Sans" font-weight="bold" font-size="16" fill="#111" textLength="25" lengthAdjust="spacingAndGlyphs">Off</text>
<path d="M182 703H189L199 696V722L189 715H182Z" fill="#fff"/><rect x="185" y="706" width="4" height="6"/><path d="M201 703Q204 709 201 715M204 700Q208 709 204 718M207 698Q211 709 207 720" stroke="#fff" fill="none"/>
<circle cx="226" cy="709" r="14" fill="url(#spk)"/><circle cx="228" cy="709" r="8" fill="#c4c8cf"/><circle cx="229" cy="709" r="4" fill="#989ca6"/>
</svg>

<!-- watermarks -->
<div class="wm" style="left:155px;top:137px;font-size:20px;color:#7a7a7a;transform:rotate(-20deg);transform-origin:0 100%;letter-spacing:1px">Dario Frade</div>
<svg class="a" style="left:0;top:0;mix-blend-mode:lighten" width="1084" height="813" viewBox="0 0 1084 813" xmlns="http://www.w3.org/2000/svg"><g fill="none"><circle cx="130" cy="160" r="18" stroke="#777" stroke-width="3"/><circle cx="700" cy="625" r="22" stroke="#a8a8a8" stroke-width="6"/><circle cx="700" cy="714" r="22" stroke="#a8a8a8" stroke-width="6"/></g></svg>
<div class="wm" style="left:738px;top:601px;font-size:44px;color:#a8a8a8;letter-spacing:3px">Dario Frade</div>
<div class="wm" style="left:738px;top:691px;font-size:44px;color:#a8a8a8;letter-spacing:3px">Dario Frade</div>
</body></html>
